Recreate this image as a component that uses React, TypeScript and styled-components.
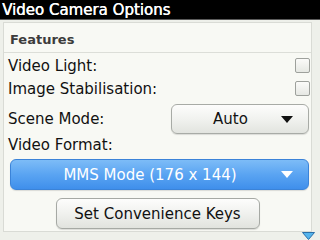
import styled, { createGlobalStyle } from 'styled-components';

const GlobalStyle = createGlobalStyle`
  html, body {
    margin: 0;
    padding: 0;
    background: #eef0ea;
  }
  body {
    font-family: "DejaVu Sans", "Liberation Sans", sans-serif;
    overflow: hidden;
  }
`;

const Screen = styled.div`
  width: 320px;
  height: 240px;
  display: flex;
  flex-direction: column;
  background: #eef0ea;
  overflow: hidden;
`;

const TitleBar = styled.div`
  height: 20px;
  flex: 0 0 20px;
  background: #000;
  color: #fff;
  font-size: 15px;
  line-height: 20px;
  padding-left: 2px;
  box-sizing: border-box;
  border-bottom: 1px solid #5a5a5a;
  white-space: nowrap;
  text-shadow: 0.4px 0 0 #fff;
`;

const Panel = styled.div`
  margin: 2px 0 0 3px;
  width: 309px;
  height: 212px;
  box-sizing: border-box;
  border: 1px solid #d9dbd5;
  background: #f8f9f4;
  display: flex;
  flex-direction: column;
`;

const SectionHeader = styled.div`
  height: 30px;
  flex: 0 0 30px;
  box-sizing: border-box;
  border-bottom: 1px solid #dcded8;
  padding: 4px 0 0 6px;
  line-height: 26px;
  font-size: 13px;
  font-weight: bold;
  color: #3c3c3c;
`;

const Body = styled.div`
  display: flex;
  flex-direction: column;
  padding: 0 2px 0 4px;
`;

const Row = styled.div<{ $h: number; $top?: number }>`
  display: flex;
  align-items: center;
  justify-content: space-between;
  height: ${(p) => p.$h}px;
  margin-top: ${(p) => p.$top ?? 0}px;
`;

const Label = styled.span`
  font-size: 15px;
  color: #111;
  white-space: nowrap;
`;

const Checkbox = styled.span`
  width: 15px;
  height: 15px;
  box-sizing: border-box;
  margin-right: -1px;
  border: 1px solid #9ea19c;
  border-radius: 2px;
  background: linear-gradient(#fbfbf9, #e6e8e3);
`;

const Select = styled.div<{ $blue?: boolean }>`
  display: flex;
  align-items: center;
  box-sizing: border-box;
  border-radius: 6px;
  font-size: 15px;
  border: 1px solid ${(p) => (p.$blue ? '#3b83d8' : '#a8aba6')};
  color: ${(p) => (p.$blue ? '#fff' : '#111')};
  background: ${(p) =>
    p.$blue
      ? 'linear-gradient(#7dbcf7, #5aa4f2 50%, #3f8feb)'
      : 'linear-gradient(#fdfdfc, #f1f2ef 50%, #e2e4df)'};
  box-shadow: 0 1px 1px rgba(0, 0, 0, 0.12);
`;

const SceneSelect = styled(Select)`
  width: 138px;
  height: 30px;
`;

const FormatSelect = styled(Select)`
  margin: 4px 0 0 2px;
  height: 31px;
`;

const SelectText = styled.span`
  flex: 1;
  text-align: center;
  padding-left: 8px;
  white-space: nowrap;
`;

const Arrow = styled.span<{ $color: string }>`
  width: 0;
  height: 0;
  margin-right: 15px;
  border-left: 6px solid transparent;
  border-right: 6px solid transparent;
  border-top: 7px solid ${(p) => p.$color};
`;

const FieldLabel = styled.div`
  font-size: 15px;
  color: #111;
  height: 19px;
  line-height: 19px;
  margin-top: 2px;
`;

const ButtonRow = styled.div`
  display: flex;
  justify-content: center;
  margin-top: 8px;
`;

const Button = styled.div`
  width: 204px;
  height: 31px;
  margin-left: -2px;
  box-sizing: border-box;
  border: 1px solid #a6a9a4;
  border-radius: 6px;
  background: linear-gradient(#fdfdfc, #f0f1ee 50%, #e1e3de);
  box-shadow: 0 1px 1px rgba(0, 0, 0, 0.12);
  display: flex;
  align-items: center;
  justify-content: center;
  font-size: 15px;
  color: #111;
  white-space: nowrap;
`;

const Footer = styled.div`
  flex: 1;
  display: flex;
  justify-content: flex-end;
  align-items: flex-start;
  padding-right: 5px;
`;

const ScrollArrow = () => (
  <svg width="13" height="8" viewBox="0 0 13 8">
    <path d="M0.5 0.5 H12.5 L6.5 7.5 Z" fill="#55b4ec" stroke="#2a6fa8" strokeWidth="1" />
  </svg>
);

const App = () => {
  return (
    <>
      <GlobalStyle />
      <Screen>
        <TitleBar>Video Camera Options</TitleBar>
        <Panel>
          <SectionHeader>Features</SectionHeader>
          <Body>
            <Row $h={23} $top={1}>
              <Label>Video Light:</Label>
              <Checkbox />
            </Row>
            <Row $h={23}>
              <Label>Image Stabilisation:</Label>
              <Checkbox />
            </Row>
            <Row $h={30} $top={4}>
              <Label>Scene Mode:</Label>
              <SceneSelect>
                <SelectText>Auto</SelectText>
                <Arrow $color="#111" />
              </SceneSelect>
            </Row>
            <FieldLabel>Video Format:</FieldLabel>
            <FormatSelect $blue>
              <SelectText>MMS Mode (176 x 144)</SelectText>
              <Arrow $color="#fff" />
            </FormatSelect>
            <ButtonRow>
              <Button>Set Convenience Keys</Button>
            </ButtonRow>
          </Body>
        </Panel>
        <Footer>
          <ScrollArrow />
        </Footer>
      </Screen>
    </>
  );
};

export default App;
